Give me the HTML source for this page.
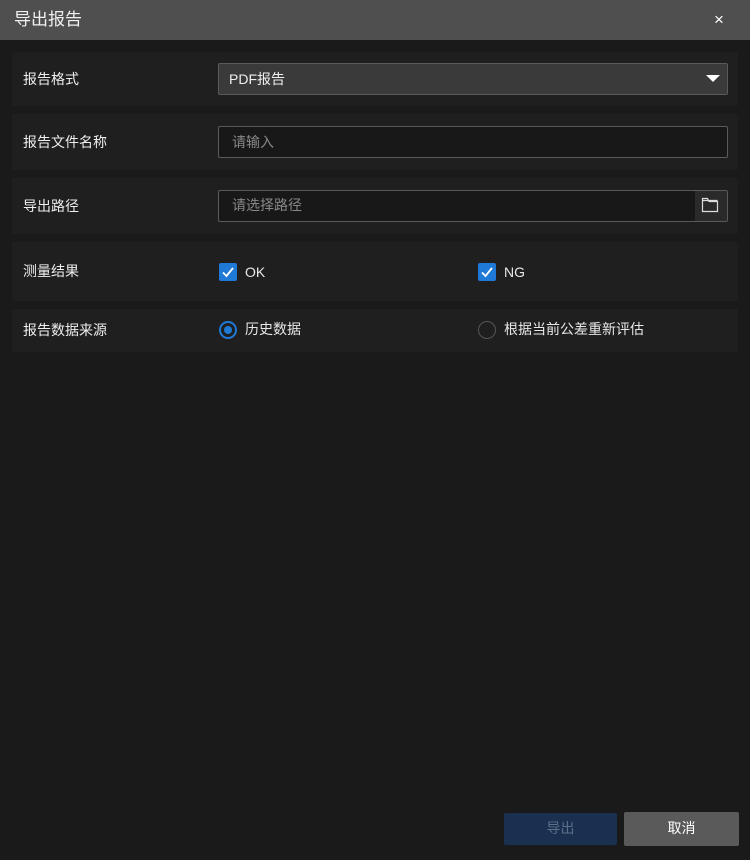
<!DOCTYPE html><html><head><meta charset="utf-8"><style>
*{margin:0;padding:0;box-sizing:border-box}
body{width:750px;height:860px;background:#1a1a1a;font-family:"Liberation Sans","Noto Sans CJK SC",sans-serif;color:#e8e8e8;position:relative;overflow:hidden;font-size:14px;line-height:18px}
.a{position:absolute}
.title{left:0;top:0;width:750px;height:40px;background:#4f4f4f}
.row{left:12px;width:726px;background:#1f1f1f;border-radius:2px}
.lab{left:23px;font-size:14px;color:#eee}
.box{left:218px;width:510px;height:32px;border:1px solid #5a5a5a;border-radius:2px}
.cb{width:18px;height:18px;background:#1e7ad6;border-radius:2px}
.rd{width:18px;height:18px;border-radius:50%}
</style></head><body>
<div class="a title"></div>
<div class="a" style="left:14px;top:9px;font-size:17px;line-height:22px;color:#f0f0f0">导出报告</div>
<div class="a" style="left:714px;top:11px;font-size:17px;color:#fff">×</div>

<div class="a row" style="top:52px;height:54px"></div>
<div class="a lab" style="top:70px">报告格式</div>
<div class="a box" style="top:63px;background:#3a3a3a"></div>
<div class="a" style="left:229px;top:70px;color:#f0f0f0">PDF报告</div>
<div class="a" style="left:706px;top:75px;width:0;height:0;border-left:7px solid transparent;border-right:7px solid transparent;border-top:7px solid #fff"></div>

<div class="a row" style="top:114px;height:56px"></div>
<div class="a lab" style="top:133px">报告文件名称</div>
<div class="a box" style="top:126px;background:#181818"></div>
<div class="a" style="left:232px;top:133px;color:#888">请输入</div>

<div class="a row" style="top:178px;height:56px"></div>
<div class="a lab" style="top:197px">导出路径</div>
<div class="a box" style="top:190px;background:#181818"></div>
<div class="a" style="left:695px;top:191px;width:32px;height:30px;background:#2a2a2a"></div>
<svg class="a" style="left:701px;top:197px" width="18" height="16" viewBox="0 0 18 16"><path d="M1.5 3.5V14.5H16.5V4.5H8L6.5 1.5H1.5V3.5H16.5" fill="none" stroke="#ddd" stroke-width="1.2"/></svg>
<div class="a" style="left:232px;top:196px;color:#888">请选择路径</div>

<div class="a row" style="top:242px;height:59px"></div>
<div class="a lab" style="top:262px">测量结果</div>
<div class="a cb" style="left:219px;top:263px"></div>
<svg class="a" style="left:219px;top:263px" width="18" height="18"><path d="M4 9.5L7.5 13L14 5" fill="none" stroke="#fff" stroke-width="1.8"/></svg>
<div class="a" style="left:245px;top:263px">OK</div>
<div class="a cb" style="left:478px;top:263px"></div>
<svg class="a" style="left:478px;top:263px" width="18" height="18"><path d="M4 9.5L7.5 13L14 5" fill="none" stroke="#fff" stroke-width="1.8"/></svg>
<div class="a" style="left:504px;top:263px">NG</div>

<div class="a row" style="top:309px;height:43px"></div>
<div class="a lab" style="top:321px">报告数据来源</div>
<div class="a rd" style="left:219px;top:321px;border:2px solid #1e7ad6"></div>
<div class="a rd" style="left:224px;top:326px;width:8px;height:8px;background:#1e7ad6"></div>
<div class="a" style="left:245px;top:320px">历史数据</div>
<div class="a rd" style="left:478px;top:321px;border:1.5px solid #555"></div>
<div class="a" style="left:504px;top:320px">根据当前公差重新评估</div>

<div class="a" style="left:504px;top:813px;width:113px;height:32px;background:#1a3050;border-radius:2px;color:#5a6e88;text-align:center;line-height:31px">导出</div>
<div class="a" style="left:624px;top:812px;width:115px;height:34px;background:#5a5a5a;border-radius:2px;color:#fff;text-align:center;line-height:33px">取消</div>
</body></html>
